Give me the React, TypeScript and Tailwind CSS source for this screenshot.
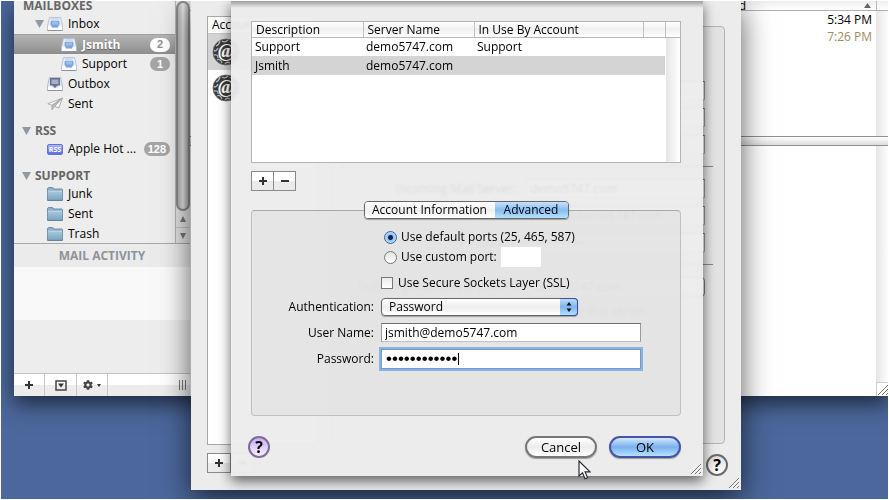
import { useState } from "react";
import type { ReactNode } from "react";
import { FaCog } from "react-icons/fa";
import clsx from "clsx";

const servers = [
  { description: "Support", server: "demo5747.com", usedBy: "Support" },
  { description: "Jsmith", server: "demo5747.com", usedBy: "" },
];

const TrayIcon = () => (
  <svg viewBox="0 0 16 16" className="h-4 w-4 shrink-0">
    <path d="M2.500 1.500h11l2 8.500v4.500H.5V10z" fill="#e9eef6" stroke="#b3bbc9" strokeWidth="0.800" />
    <path d="M4.200 2h7.600l.7 8h-9z" fill="#c9def4" />
    <path d="M3.800 5h8.400l.3 3-1.500 3.500H5L3.500 8z" fill="#7fa5dc" />
    <path d="M5 5.500h6v3H5z" fill="#9dbdea" />
    <path d="M1 10h2.800l1.400 2h5.600l1.400-2H15v4H1z" fill="#fdfeff" />
    <path d="M.6 14.500h14.800" stroke="#8794ab" strokeWidth="1" />
  </svg>
);

const OutboxIcon = () => (
  <svg viewBox="0 0 16 16" className="h-4 w-4 shrink-0">
    <path d="M2.500 1.500h11l2 8.500v4.500H.5V10z" fill="#e3e6ef" stroke="#a8aec0" strokeWidth="0.800" />
    <path d="M3 2h10v7.500h-2.500L8 12 5.500 9.500H3z" fill="#68718f" />
    <path d="M4.500 3.500h7V8h-7z" fill="#a7afcb" />
    <path d="M1 10.500h3l1.400 1.800h5.200l1.400-1.800h3V14H1z" fill="#fdfeff" />
    <path d="M.6 14.500h14.800" stroke="#8794ab" strokeWidth="1" />
  </svg>
);

const SentIcon = () => (
  <svg viewBox="0 0 16 16" className="h-4 w-4 shrink-0">
    <path d="M15.200 2.200L.8 7.800l4.200 1.500z" fill="#fff" stroke="#a0a0a0" strokeWidth="0.800" />
    <path d="M15.200 2.200L5 9.300v4.400l2.600-3.400z" fill="#c4c4c4" stroke="#9a9a9a" strokeWidth="0.800" />
    <path d="M15.200 2.200L7.600 10.300l4.300 1.800z" fill="#f8f8f8" stroke="#9a9a9a" strokeWidth="0.800" />
  </svg>
);

const RssIcon = () => (
  <span className="flex h-[11px] w-4 shrink-0 items-center justify-center rounded-[2px] border border-[#6670d4] bg-gradient-to-b from-[#a9b4f6] to-[#5a6ae4] text-[7px] leading-none font-bold text-white">
    RSS
  </span>
);

const FolderIcon = () => (
  <svg viewBox="0 0 16 14" className="h-[14px] w-4 shrink-0">
    <defs>
      <linearGradient id="folder" x1="0" y1="0" x2="0" y2="1">
        <stop offset="0" stopColor="#abc9de" />
        <stop offset="1" stopColor="#7ba3c2" />
      </linearGradient>
    </defs>
    <path d="M.5 13V1.500L1.300.6h4.500l1 1.400h8.200l.5.500V13z" fill="#8fb3cc" stroke="#64879f" strokeWidth="0.900" />
    <path d="M.8 4h14.400v9.200H.8z" fill="url(#folder)" />
    <path d="M1 4.200h14" stroke="#c6dcea" strokeWidth="0.800" />
    <path d="M.3 13.400h15.400" stroke="#567a94" strokeWidth="0.900" />
  </svg>
);

const Triangle = () => (
  <svg viewBox="0 0 9 8" className="h-2 w-[9px] shrink-0">
    <path d="M0 0h9L4.500 8z" fill="#8f99a6" />
  </svg>
);

const ResizeGrip = () => (
  <svg viewBox="0 0 12 12" className="h-3 w-3">
    <path d="M1 11L11 1M5 11l6-6M9 11l2-2" stroke="#777" strokeWidth="1" />
    <path d="M2 11.500l9.500-9.500M6 11.500L11.500 6" stroke="#fff" strokeWidth="0.700" />
  </svg>
);

const Plus = () => (
  <svg viewBox="0 0 8 8" className="h-2 w-2">
    <path d="M4 0v8M0 4h8" stroke="#333" strokeWidth="2" />
  </svg>
);

const Minus = () => (
  <svg viewBox="0 0 8 8" className="h-2 w-2">
    <path d="M0 4h8" stroke="#333" strokeWidth="2" />
  </svg>
);

const AccountBadge = () => (
  <svg viewBox="0 0 28 28" className="h-7 w-7 shrink-0">
    <circle cx="14" cy="14" r="13" fill="#3a3a3a" stroke="#6b6b6b" strokeWidth="0.800" />
    <path
      d="M4 8q3-1 4-5M2 13q3 0 4-3M2 17q4-1 4 3M5 22q3-2 5 3M10 3q3 2 6-1M18 3q2 3 5 2M20 24q1-3 4-4M13 26q2-3 5-1M23 9q1 3 3 3M22 16q2 1 4 0"
      stroke="#b4b4b4"
      strokeWidth="1.300"
      fill="none"
    />
    <text
      x="14"
      y="19"
      textAnchor="middle"
      fill="#fff"
      className="font-['Liberation_Serif'] text-[19px] font-bold italic"
    >
      @
    </text>
  </svg>
);

type RowProps = {
  icon: ReactNode;
  label: string;
  count?: number;
  nested?: boolean;
  open?: boolean;
  selected?: boolean;
};

const MailboxRow = ({ icon, label, count, nested, open, selected }: RowProps) => (
  <li
    className={clsx(
      "flex h-5 items-center pr-[5px]",
      nested ? "pl-[47px]" : open ? "pl-[21px]" : "pl-[33px]",
      selected &&
        "border-t border-[#a0a0a0] bg-gradient-to-b from-[#b4b4b4] to-[#8e8e8e] font-bold text-white text-shadow-[0_1px_1px_rgba(0,0,0,0.4)]",
    )}
  >
    {open && (
      <span className="mr-[3px] flex">
        <Triangle />
      </span>
    )}
    {icon}
    <span className="ml-[5px] flex-1 whitespace-nowrap">{label}</span>
    {count && (
      <span
        className={clsx(
          "flex h-[14px] min-w-5 items-center justify-center rounded-full px-1 font-['Liberation_Sans'] text-[11px] font-bold text-shadow-none",
          selected ? "bg-white text-[#8f8f8f]" : "bg-[#a5a5a5] text-white",
        )}
      >
        {count}
      </span>
    )}
  </li>
);

const SectionTitle = ({ children, open }: { children: string; open?: boolean }) => (
  <h2
    className={clsx(
      "flex items-center gap-1 leading-none font-bold text-[#666]",
      open ? "mt-2 h-[17px] pl-2" : "h-[13px] pb-1 pl-[9px]",
    )}
  >
    {open && <Triangle />}
    {children}
  </h2>
);

const Sidebar = () => (
  <aside className="flex w-[176px] flex-col bg-[#ededed]">
    <div className="flex h-[242px] overflow-hidden">
      <nav className="min-w-0 flex-1">
        <SectionTitle>MAILBOXES</SectionTitle>
        <ul>
          <MailboxRow icon={<TrayIcon />} label="Inbox" open />
          <MailboxRow icon={<TrayIcon />} label="Jsmith" count={2} nested selected />
          <MailboxRow icon={<TrayIcon />} label="Support" count={1} nested />
          <MailboxRow icon={<OutboxIcon />} label="Outbox" />
          <MailboxRow icon={<SentIcon />} label="Sent" />
        </ul>
        <SectionTitle open>RSS</SectionTitle>
        <ul>
          <MailboxRow icon={<RssIcon />} label="Apple Hot ..." count={128} />
        </ul>
        <SectionTitle open>SUPPORT</SectionTitle>
        <ul>
          <MailboxRow icon={<FolderIcon />} label="Junk" />
          <MailboxRow icon={<FolderIcon />} label="Sent" />
          <MailboxRow icon={<FolderIcon />} label="Trash" />
        </ul>
      </nav>
      <div className="flex w-[15px] flex-col border-l border-[#b5b5b5] bg-[#e4e4e4]">
        <div className="flex-1 rounded-full border-2 border-[#8a8a8a] bg-gradient-to-r from-[#b0b0b0] via-[#e9e9e9] to-[#b0b0b0]" />
        <div className="flex h-4 items-center justify-center">
          <svg viewBox="0 0 6 6" className="h-[6px] w-[6px]">
            <path d="M3 0l3 6H0z" fill="#777" />
          </svg>
        </div>
        <div className="flex h-4 items-center justify-center border-t border-[#c5c5c5]">
          <svg viewBox="0 0 6 6" className="h-[6px] w-[6px]">
            <path d="M3 6l3-6H0z" fill="#777" />
          </svg>
        </div>
      </div>
    </div>
    <h2 className="flex h-6 items-center justify-center border-t border-[#a8a8a8] bg-[#ebebeb] font-bold text-[#8e929a]">
      MAIL ACTIVITY
    </h2>
    <div className="h-[53px] bg-[#f9f9f9]" />
    <div className="flex-1" />
    <div className="flex h-[23px] border-t border-[#c4c4c4] bg-gradient-to-b from-white from-50% to-[#ececec] to-50%">
      <button aria-label="Add mailbox" className="flex w-[31px] items-center justify-center border-r border-[#c8c8c8]">
        <Plus />
      </button>
      <button aria-label="Show activity" className="flex w-8 items-center justify-center border-r border-[#c8c8c8]">
        <svg viewBox="0 0 12 11" className="h-[11px] w-3">
          <path d="M1 1h10v9H1z" stroke="#444" strokeWidth="1.500" fill="none" />
          <path d="M3 3.500h6L6 7.500z" fill="#333" />
        </svg>
      </button>
      <button aria-label="Actions" className="flex w-[31px] items-center justify-center gap-1 border-r border-[#c8c8c8]">
        <FaCog className="h-[10px] w-[10px] text-[#444]" />
        <svg viewBox="0 0 4 3" className="h-[3px] w-1">
          <path d="M0 0h4L2 3z" fill="#333" />
        </svg>
      </button>
      <div className="flex flex-1 items-center justify-end gap-[2px] pr-1">
        <i className="h-[10px] w-px bg-[#777]" />
        <i className="h-[10px] w-px bg-[#777]" />
        <i className="h-[10px] w-px bg-[#777]" />
      </div>
    </div>
  </aside>
);

const MessagePane = () => (
  <main className="flex min-w-0 flex-1 flex-col bg-white">
    <div className="flex h-[10px] items-center border-b border-[#b0b0b0] bg-gradient-to-b from-[#eee] to-white">
      <span className="w-[556px] text-right leading-none">Date Received</span>
      <span className="flex flex-1 justify-end pr-[5px]">
        <svg viewBox="0 0 7 5" className="h-[5px] w-[7px]">
          <path d="M3.500 0L7 5H0z" fill="#666" />
        </svg>
      </span>
      <span className="h-full w-[13px] border-l border-[#b8b8b8]" />
    </div>
    <div className="flex h-[125px]">
      <ul className="flex-1 pr-1 text-right">
        <li className="h-[17px] leading-[18px]">5:34 PM</li>
        <li className="h-[17px] leading-[18px] text-[#a08c62]">7:26 PM</li>
      </ul>
      <div className="w-[13px] bg-gradient-to-r from-[#e6e6e6] to-white" />
    </div>
    <div className="h-[10px] border-y border-[#8f8f8f] bg-gradient-to-b from-white to-[#dcdcdc]" />
    <div className="flex flex-1">
      <div className="flex-1" />
      <div className="flex w-[13px] flex-col justify-end bg-gradient-to-r from-[#e6e6e6] to-white">
        <div className="flex h-[14px] items-end border-t border-l border-[#ccc] bg-white">
          <ResizeGrip />
        </div>
      </div>
    </div>
  </main>
);

const fieldClass =
  "h-[19px] w-full border border-t-[#6e6e6e] border-r-[#9a9a9a] border-b-[#c0c0c0] border-l-[#9a9a9a] bg-white px-[3px] outline-none";

const HelpButton = ({ purple }: { purple?: boolean }) => (
  <button
    aria-label="Help"
    className={clsx(
      "flex h-[22px] w-[22px] items-center justify-center rounded-full border-2 text-base leading-none font-bold",
      purple
        ? "border-[#7d6c9c] bg-gradient-to-b from-[#c9aef2] to-[#f6eeff]"
        : "border-[#6a6a6a] bg-gradient-to-b from-[#dedede] to-white",
    )}
  >
    ?
  </button>
);

const squareButton =
  "flex h-5 items-center justify-center border border-[#8a8a8a] bg-gradient-to-b from-white from-50% to-[#ebebeb] to-50%";

const Preferences = () => (
  <div className="flex h-full flex-col px-4 pt-[15px]">
    <div className="flex gap-3">
      <div className="h-[429px] w-[111px] border border-[#a8a8a8] bg-white">
        <h2 className="h-[17px] border-b border-[#c5c5c5] pl-1 leading-4">Accounts</h2>
        <ul>
          <li className="flex h-9 items-center bg-[#d4d4d4] pl-1">
            <AccountBadge />
          </li>
          <li className="flex h-9 items-center pl-1">
            <AccountBadge />
          </li>
        </ul>
      </div>
      <div className="mt-[10px] h-[418px] flex-1 rounded border border-[#b4b4b4] bg-[#e3e3e3] pr-[11px] pt-[54px] pl-2">
        <div className="grid grid-cols-[177px_1fr] gap-x-[10px] gap-y-2 pr-2 text-right">
          <input aria-label="Description" className={clsx(fieldClass, "col-start-2")} />
          <input aria-label="Email Address" className={clsx(fieldClass, "col-start-2")} />
          <input aria-label="Full Name" className={clsx(fieldClass, "col-start-2")} />
        </div>
        <hr className="my-3 border-[#888]" />
        <div className="grid grid-cols-[177px_1fr] items-center gap-x-[10px] gap-y-2 pr-2 text-right">
          <label htmlFor="incoming">Incoming Mail Server:</label>
          <input id="incoming" className={fieldClass} defaultValue="demo5747.com" />
          <label htmlFor="incoming-user">User Name:</label>
          <input id="incoming-user" className={fieldClass} defaultValue="jsmith@demo5747.com" />
          <label htmlFor="incoming-pass">Password:</label>
          <input id="incoming-pass" type="password" className={fieldClass} defaultValue="xxxxxxxxxxxx" />
        </div>
        <hr className="my-3 border-[#888]" />
        <div className="flex items-center justify-end gap-[6px] pr-2">
          <label htmlFor="smtp" className="whitespace-nowrap">Outgoing Mail Server (SMTP):</label>
          <select
            id="smtp"
            className="h-5 w-[180px] appearance-none rounded border border-[#777] bg-gradient-to-b from-white to-[#ececec] px-2"
          >
            <option>demo5747.com</option>
          </select>
        </div>
        <label className="mt-[6px] flex items-center justify-end gap-[5px] pr-[67px]">
          <input type="checkbox" className="h-3 w-3 appearance-none border border-[#888]" />
          Use only this server
        </label>
      </div>
    </div>
    <div className="mt-2 flex items-start justify-between">
      <div className="flex">
        <button aria-label="Add account" className={clsx(squareButton, "w-6")}>
          <Plus />
        </button>
        <button aria-label="Remove account" className={clsx(squareButton, "w-6 border-l-0")}>
          <Minus />
        </button>
      </div>
      <div className="mt-px -mr-[3px]">
        <HelpButton />
      </div>
    </div>
    <div className="absolute right-px bottom-px">
      <ResizeGrip />
    </div>
  </div>
);

const ServerTable = () => (
  <div className="h-[142px] border border-[#b4b4b4] bg-gradient-to-r from-white from-[414px] via-[#e6e6e6] via-[414px] to-white">
    <table className="w-full table-fixed text-left">
      <thead>
        <tr className="h-[15px] bg-gradient-to-b from-white via-[#f0f0f0] to-white shadow-[0_1px_0_#b8b8b8]">
          <th className="w-[111px] border-r border-[#c0c0c0] p-0 pl-1 leading-[15px] font-normal">Description</th>
          <th className="w-[111px] border-r border-[#c0c0c0] p-0 pl-1 leading-[15px] font-normal">Server Name</th>
          <th className="border-r border-[#c0c0c0] p-0 pl-1 leading-[15px] font-normal">In Use By Account</th>
          <th className="w-[22px] border-r border-[#c0c0c0] p-0" />
          <th className="w-[15px] p-0" />
        </tr>
      </thead>
      <tbody>
        {servers.map((s) => (
          <tr key={s.description} className="h-[19px]">
            {[s.description, s.server, s.usedBy, ""].map((text, i) => (
              <td key={i} className={clsx("p-0 pl-[3px] leading-[19px]", s.usedBy === "" && "bg-[#d4d4d4]")}>
                {text}
              </td>
            ))}
            <td className="p-0" />
          </tr>
        ))}
      </tbody>
    </table>
  </div>
);

const Radio = ({ checked, onChange, id }: { checked: boolean; onChange: () => void; id: string }) => (
  <input
    id={id}
    type="radio"
    name="port"
    checked={checked}
    onChange={onChange}
    className="h-[13px] w-[13px] shrink-0 appearance-none rounded-full border border-[#777] bg-gradient-to-b from-[#e2e2e2] to-white checked:border-[#3d5f96] checked:bg-[radial-gradient(circle,#12264f_2px,#8fc0f4_3px,#c5e4ff_6px)]"
  />
);

const AdvancedSheet = () => {
  const [port, setPort] = useState("default");

  return (
    <section className="absolute top-0 left-10 h-[475px] w-[472px] bg-[#ececec]/94 bg-gradient-to-b from-[#9a9f9a] to-transparent bg-[length:100%_7px] bg-no-repeat pt-5 pr-[22px] pl-5 shadow-[0_5px_12px_rgba(0,0,0,0.6)] backdrop-blur-[1px]">
      <ServerTable />
      <div className="mt-2 flex">
        <button aria-label="Add server" className={clsx(squareButton, "w-[23px]")}>
          <Plus />
        </button>
        <button aria-label="Remove server" className={clsx(squareButton, "w-[22px] border-l-0")}>
          <Minus />
        </button>
      </div>

      <div className="mt-[10px] flex h-[18px] justify-center">
        <div className="z-10 flex overflow-hidden rounded border border-[#666] shadow-[0_1px_1px_rgba(0,0,0,0.3)]">
          <button className="w-[130px] bg-gradient-to-b from-white via-[#f0f0f0] to-white leading-4">
            Account Information
          </button>
          <button className="w-[73px] bg-gradient-to-b from-[#c8e2fb] via-[#86bcf3] to-[#b7e2ff] leading-4">
            Advanced
          </button>
        </div>
      </div>
      <form className="-mt-[9px] flex h-[206px] flex-col rounded border border-[#c0c0c0] border-t-[#a8a8a8] bg-[#dcdcdc]/45 pt-4">
        <div className="flex h-5 items-center gap-1 pl-[132px]">
          <Radio id="default-port" checked={port === "default"} onChange={() => setPort("default")} />
          <label htmlFor="default-port">Use default ports (25, 465, 587)</label>
        </div>
        <div className="flex h-5 items-center gap-1 pl-[132px]">
          <Radio id="custom-port" checked={port === "custom"} onChange={() => setPort("custom")} />
          <label htmlFor="custom-port">Use custom port:</label>
          <input aria-label="Custom port number" className="h-5 w-10 bg-white outline-none" />
        </div>
        <div className="mt-[6px] flex h-5 items-center gap-[5px] pl-[129px]">
          <input
            id="ssl"
            type="checkbox"
            className="h-3 w-3 appearance-none border border-[#777] bg-gradient-to-b from-[#ececec] to-white"
          />
          <label htmlFor="ssl">Use Secure Sockets Layer (SSL)</label>
        </div>
        <div className="mt-[5px] grid grid-cols-[122px_260px] items-center gap-x-[7px] gap-y-[7px] text-right">
          <label htmlFor="auth">Authentication:</label>
          <div className="relative h-[18px] w-[197px]">
            <select
              id="auth"
              className="block h-full w-full appearance-none rounded border border-[#666] bg-gradient-to-b from-white via-[#ededed] to-white pl-[7px] text-left shadow-[0_1px_1px_rgba(0,0,0,0.3)] outline-none"
            >
              <option>Password</option>
            </select>
            <span className="pointer-events-none absolute inset-y-0 right-0 flex w-[18px] items-center justify-center rounded-r border border-l-0 border-[#3a4f96] bg-gradient-to-b from-[#bcdcfb] via-[#7db4f0] to-[#b5e0ff]">
              <svg viewBox="0 0 6 10" className="h-[10px] w-[6px]">
                <path d="M3 0l2.500 3.600h-5zM3 10L.5 6.400h5z" fill="#111" />
              </svg>
            </span>
          </div>
          <label htmlFor="user">User Name:</label>
          <input id="user" className={fieldClass} defaultValue="jsmith@demo5747.com" />
          <label htmlFor="password">Password:</label>
          <div className="relative">
            <input
              id="password"
              type="password"
              defaultValue="xxxxxxxxxxxx"
              className="block h-5 w-full border border-[#6f9ad6] bg-white px-1 font-['Liberation_Sans'] text-[17px] shadow-[0_0_0_2px_#8db1e0] outline-none"
            />
            <i className="absolute top-1 left-[77px] h-3 w-px bg-black" />
          </div>
        </div>
      </form>

      <div className="mt-5 flex items-center">
        <div className="-ml-[3px] flex-1">
          <HelpButton purple />
        </div>
        <div className="flex gap-3 text-[13px]">
          <button className="h-[22px] w-[72px] rounded-full border-2 border-[#777] bg-gradient-to-b from-white via-[#ececec] to-white leading-none shadow-[0_1px_1px_rgba(0,0,0,0.35)]">
            Cancel
          </button>
          <button className="h-[22px] w-[72px] rounded-full border-2 border-[#4553a5] bg-gradient-to-b from-[#d4e8fb] via-[#79b0ee] to-[#b4e2ff] leading-none shadow-[0_1px_1px_rgba(0,0,0,0.35)]">
            OK
          </button>
        </div>
      </div>
      <div className="absolute right-px bottom-px">
        <ResizeGrip />
      </div>
    </section>
  );
};

const App = () => (
  <div className="relative h-screen overflow-hidden border border-white bg-[#4b679b] font-['Open_Sans','Noto_Sans',sans-serif] text-xs text-black">
    <div className="absolute top-0 -right-px left-[13px] flex h-[395px] shadow-[0_8px_20px_rgba(0,0,0,0.6)]">
      <Sidebar />
      <MessagePane />
    </div>
    <div className="absolute top-0 left-[190px] h-[489px] w-[550px] bg-[#ececec] shadow-[0_8px_28px_rgba(0,0,0,0.65)]">
      <Preferences />
      <AdvancedSheet />
    </div>
    <svg viewBox="0 0 13 20" className="absolute top-[459px] left-[577px] h-5 w-[13px]">
      <path d="M1 1v15l3.500-3.200 2.500 5.900 2.600-1.100-2.500-5.700H12z" fill="#fff" stroke="#2a2a3a" strokeWidth="1.200" />
    </svg>
  </div>
);

export default App;
